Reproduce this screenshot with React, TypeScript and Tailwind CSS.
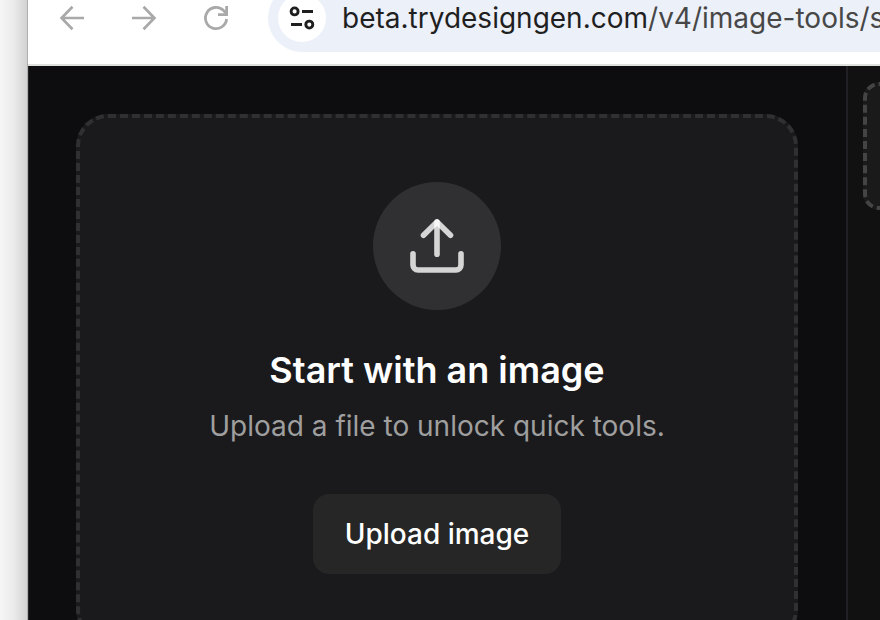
function BackIcon() {
  return (
    <svg className="size-7" viewBox="0 0 28 28" fill="none" stroke="currentColor" strokeWidth={2.7}>
      <path d="M26 14H4M14.5 2.8L3.6 14l10.9 11.2" />
    </svg>
  )
}

function ForwardIcon() {
  return (
    <svg className="size-7" viewBox="0 0 28 28" fill="none" stroke="currentColor" strokeWidth={2.7}>
      <path d="M2 14h22M13.5 2.8L24.4 14l-10.9 11.2" />
    </svg>
  )
}

function ReloadIcon() {
  return (
    <svg className="size-7" viewBox="0 0 28 28" fill="none" stroke="currentColor" strokeWidth={2.8}>
      <path d="M24.6 15A10.6 10.6 0 1 1 21.6 6.6L24.6 9.8" />
      <path d="M16 10.6h8.6V2" />
    </svg>
  )
}

function SiteInfoIcon() {
  return (
    <svg className="size-7" viewBox="0 0 28 28" fill="none" stroke="currentColor" strokeWidth={2.9}>
      <circle cx="6.6" cy="7.4" r="3.5" />
      <path d="M14 7.5h11M3 20.5h11" />
      <circle cx="21.3" cy="20.6" r="3.5" />
    </svg>
  )
}

// strokes are translucent, so the arrow tip is brighter where they overlap
function UploadIcon() {
  return (
    <svg className="size-16" viewBox="0 0 64 64" fill="none" stroke="#fff" strokeOpacity={0.8} strokeWidth={5.6} strokeLinecap="round" strokeLinejoin="round">
      <path d="M8 39.8V51a5 5 0 0 0 5 5h38a5 5 0 0 0 5-5V39.8" />
      <path d="M18.5 21.3L32 8l13.5 13.3" />
      <path d="M32 8v32.3" />
    </svg>
  )
}

function BrowserBar() {
  return (
    <header className="flex h-[66px] items-end border-b-2 border-[#dfe1df] bg-white pb-3">
      <div className="flex h-17 w-full items-center pl-[30px]">
        <div className="flex shrink-0 gap-11 text-[#a9a9a9]">
          <button aria-label="Back"><BackIcon /></button>
          <button aria-label="Forward"><ForwardIcon /></button>
          <button aria-label="Reload"><ReloadIcon /></button>
        </div>
        <div className="ml-[38px] flex h-17 min-w-0 flex-1 items-center gap-4 overflow-hidden rounded-l-full bg-[#ecf0f9] pl-[10px]">
          <button aria-label="Site information" className="flex size-12 shrink-0 items-center justify-center rounded-full bg-white text-[#1f1f1f]">
            <SiteInfoIcon />
          </button>
          <p className="whitespace-nowrap text-[28px] leading-9 text-[#474747]">
            <span className="text-[#1f1f1f]">beta.trydesigngen.com</span>/v4/image-tools/se
          </p>
        </div>
      </div>
    </header>
  )
}

function UploadCard() {
  return (
    <section className="flex flex-col items-center rounded-[32px] border-4 border-dashed border-[#303032] bg-[#1a1a1c] p-16 text-center">
      <div className="flex size-32 items-center justify-center rounded-full bg-[#303032]">
        <UploadIcon />
      </div>
      <h1 className="mt-8 text-[36px] leading-14 font-semibold text-white">Start with an image</h1>
      <p className="mt-2 text-[28px] leading-10 text-[#9f9f9f]">Upload a file to unlock quick tools.</p>
      <button className="mt-12 h-20 rounded-2xl bg-[#262626] px-8 text-[28px] font-medium text-white">
        Upload image
      </button>
    </section>
  )
}

export default function App() {
  return (
    <div className="flex h-screen overflow-hidden bg-[#ededed] font-['Inter',sans-serif]">
      <div className="w-7 shrink-0 border-r border-[#adadad] bg-linear-to-r from-[#f6f6f6] via-[#ebebeb] to-[#d2d2d2]" />
      <div className="flex min-w-0 flex-1 flex-col">
        <BrowserBar />
        <div className="flex min-h-0 flex-1 bg-[#0d0d0f]">
          <main className="min-w-0 flex-1 border-l border-[#252527] py-12 pr-12 pl-[47px]">
            <UploadCard />
          </main>
          <aside className="w-[34px] shrink-0 overflow-hidden border-l-2 border-[#202025] bg-[#111111] py-4 pl-[15px]">
            <div className="size-32 rounded-2xl border-4 border-dashed border-[#444444] bg-[#1a1a1a]" />
          </aside>
        </div>
      </div>
    </div>
  )
}
